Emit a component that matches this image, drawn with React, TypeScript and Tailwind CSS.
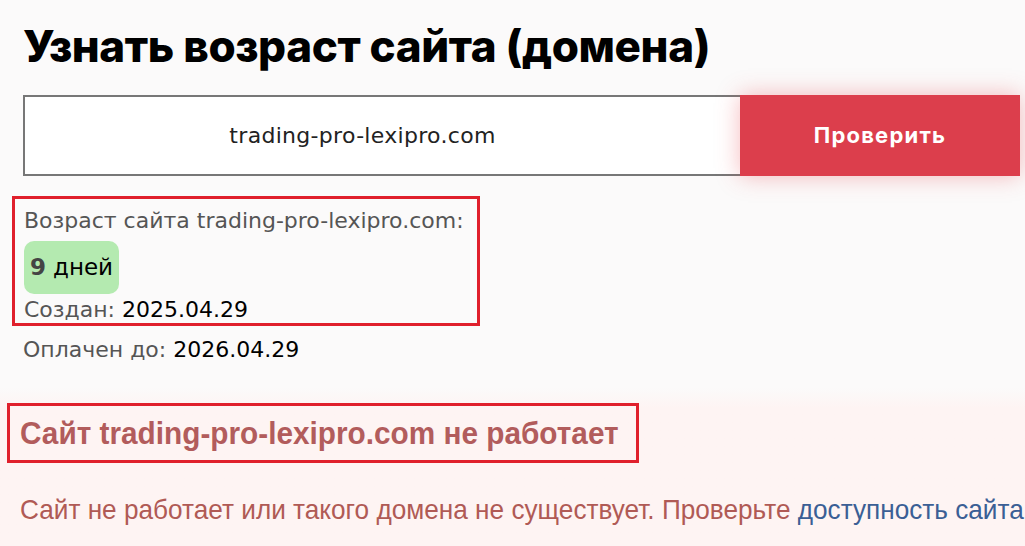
export default function App() {
  return (
    <div className="w-[1025px] h-[546px] overflow-hidden bg-[#fbfafa] font-['Inter',sans-serif]">
      <div className="pl-[23px] pr-[5px] pt-[18px]">
        <h1 className="text-[44px] leading-[56px] font-extrabold text-black tracking-[-0.4px]">
          Узнать возраст сайта (домена)
        </h1>

        <div className="mt-[21px] flex h-[81px]">
          <div className="flex-1 flex items-center justify-center pr-[40px] bg-white border-2 border-[#777] border-r-0 text-[22px] tracking-[0.3px] text-[#222] font-['DejaVu_Sans',sans-serif]">
            trading-pro-lexipro.com
          </div>
          <button className="w-[280px] bg-[#dc3e4c] text-white font-bold text-[22px] tracking-[1.2px] shadow-[0_0_22px_rgba(230,60,70,0.35)]">
            Проверить
          </button>
        </div>
      </div>

      <div className="font-['DejaVu_Sans',sans-serif]">
        <div className="mt-[20px] ml-[12px] w-[468px] border-[3px] border-[#e0202c] pl-[9px] text-[22px] text-[#555]">
          <div className="leading-[40px] pt-[2px] whitespace-nowrap">Возраст сайта trading-pro-lexipro.com:</div>
          <div className="flex items-center justify-center w-[95px] h-[53px] rounded-[10px] bg-[#b4eab0] text-[23px] text-black">
            <span className="font-bold text-[#444] mr-[7px]">9</span>дней
          </div>
          <div className="pt-[3px] leading-[26px]">
            Создан: <span className="text-black">2025.04.29</span>
          </div>
        </div>
        <div className="ml-[23px] mt-[6px] text-[22px] text-[#555] leading-[36px]">
          Оплачен до: <span className="text-black">2026.04.29</span>
        </div>
      </div>

      <div className="mt-[20px] bg-gradient-to-b from-[#fbfafa] to-[#fef4f3] to-[20px] pt-[15px] h-[200px] font-['Liberation_Sans',sans-serif]">
        <div className="ml-[7px] w-[632px] h-[60px] border-[3px] border-[#e0202c] flex items-center pl-[10px]">
          <span className="text-[32px] font-bold text-[#b25c5c] scale-x-[0.93] origin-left whitespace-nowrap">
            Сайт trading-pro-lexipro.com не работает
          </span>
        </div>
        <p className="mt-[26px] ml-[20px] whitespace-nowrap text-[28px] text-[#b05a55] scale-x-[0.935] origin-left">
          Сайт не работает или такого домена не существует. Проверьте{' '}
          <span className="text-[#3b5f95]">доступность сайта</span>
        </p>
      </div>
    </div>
  )
}
